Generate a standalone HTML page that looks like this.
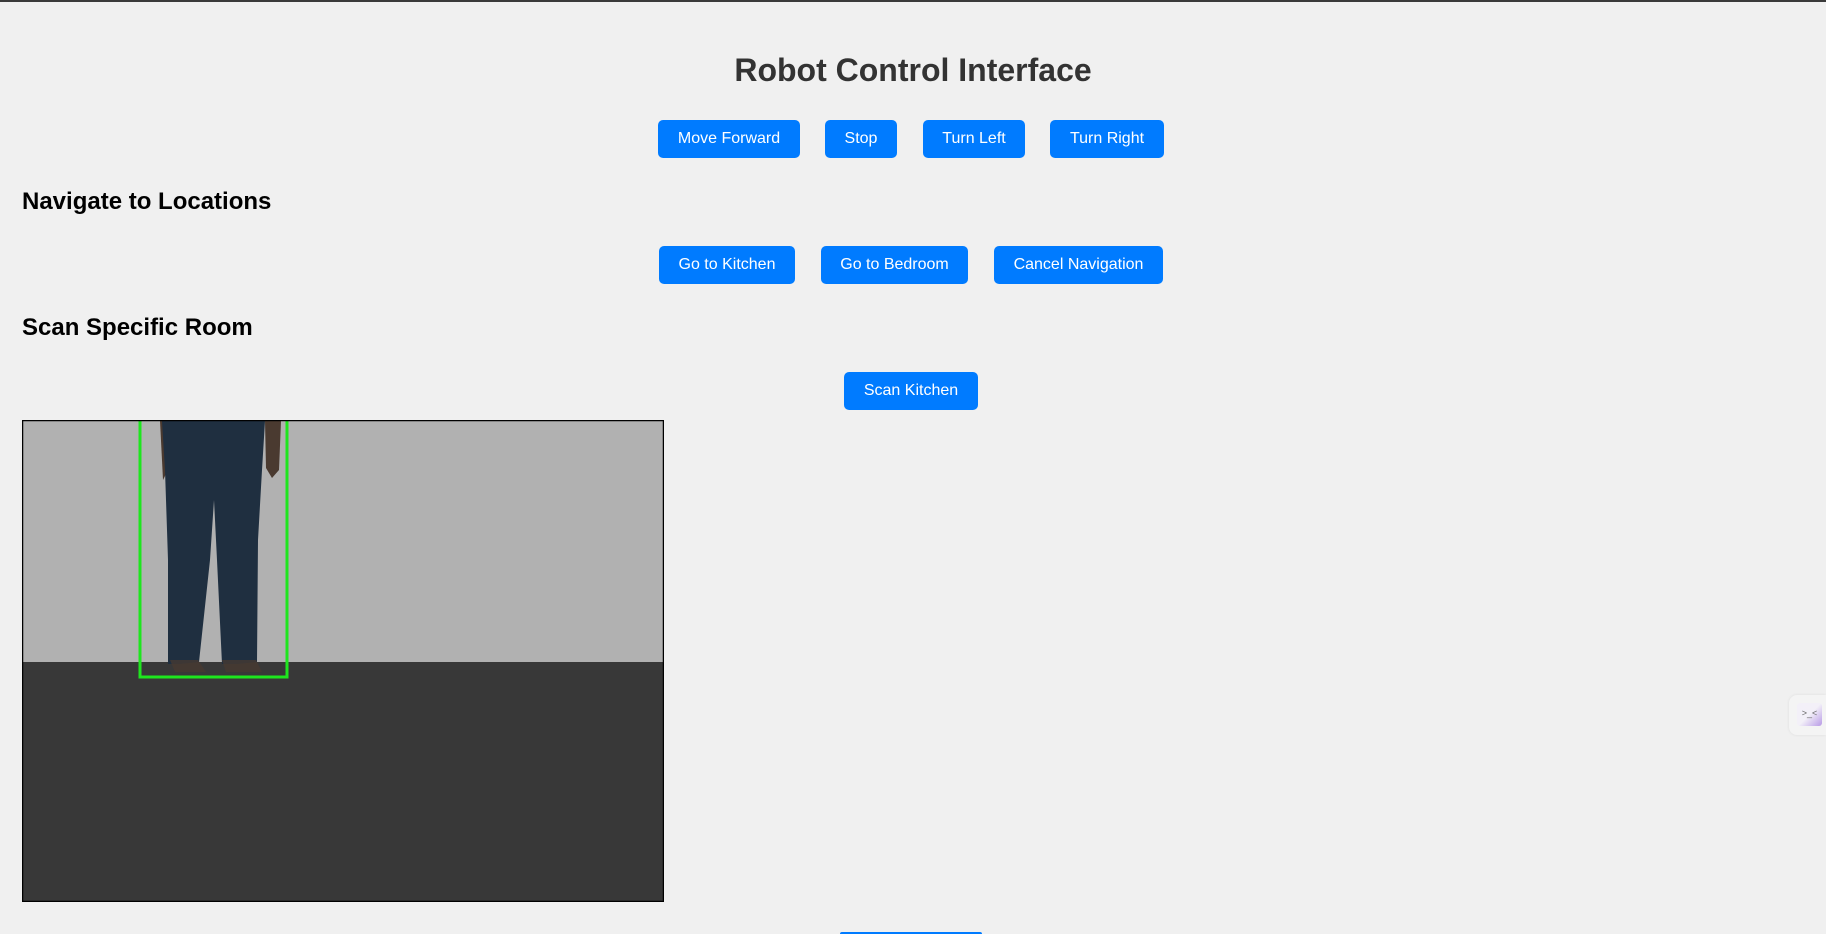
<!DOCTYPE html>
<html style="overflow:hidden;height:934px"><head><meta charset="utf-8"><style>
body{margin:0;width:1826px;height:934px;overflow:hidden;background:#f0f0f0;font-family:"Liberation Sans",Arial,sans-serif;position:relative;border-top:2px solid #3a3a3a;box-sizing:border-box}
.b{position:absolute;background:#007bff;color:#fff;border-radius:5px;height:38px;line-height:38px;text-align:center;font-size:16px}
h1,h2{position:absolute;margin:0;font-weight:bold}
h1{font-size:32px;color:#333;left:0;width:1826px;text-align:center;top:50px}
h2{font-size:24px;color:#000;left:22px}
</style></head><body>
<h1>Robot Control Interface</h1>
<div class="b" style="left:658px;top:118px;width:142px">Move Forward</div>
<div class="b" style="left:825px;top:118px;width:72px">Stop</div>
<div class="b" style="left:923px;top:118px;width:102px">Turn Left</div>
<div class="b" style="left:1050px;top:118px;width:114px">Turn Right</div>
<h2 style="top:186px">Navigate to Locations</h2>
<div class="b" style="left:659px;top:244px;width:136px">Go to Kitchen</div>
<div class="b" style="left:821px;top:244px;width:147px">Go to Bedroom</div>
<div class="b" style="left:994px;top:244px;width:169px">Cancel Navigation</div>
<h2 style="top:312px">Scan Specific Room</h2>
<div class="b" style="left:844px;top:370px;width:134px">Scan Kitchen</div>
<svg style="position:absolute;left:22px;top:418px" width="642" height="482" viewBox="22 420 642 482">
<rect x="22" y="420" width="642" height="482" fill="#b1b1b1"/>
<rect x="22" y="662" width="642" height="240" fill="#383838"/>
<path d="M160 421 L166 421 L168 470 L163 480 Z" fill="#4a3a30"/>
<path d="M265 421 L281 421 L279 470 L272 478 L266 468 Z" fill="#4a3a30"/>
<path d="M162 421 L265 421 L262 470 L258 540 L257 662 L237 664 L222 664 L217 560 L214 500 L210 560 L199 662 L180 664 L168 664 L168 560 L165 470 Z" fill="#1f2f40"/>
<path d="M170 660 L198 660 L206 672 L175 672 Z M222 660 L256 660 L262 672 L226 672 Z" fill="#4a3a30" opacity=".7"/>
<rect x="140" y="418" width="147" height="259" fill="none" stroke="#1ee61e" stroke-width="3"/>
<rect x="22.5" y="420.5" width="641" height="481" fill="none" stroke="#000" stroke-width="1.5"/>
</svg>
<div style="position:absolute;left:840px;top:930px;width:142px;height:2px;background:#007bff;border-radius:3px 3px 0 0"></div>
<div style="position:absolute;left:1789px;top:693px;width:37px;height:40px;background:#f4f4f4;border-radius:8px 0 0 8px;box-shadow:0 0 3px rgba(0,0,0,.08)"></div>
<div style="position:absolute;left:1797px;top:701px;width:25px;height:23px;border-radius:3px;background:linear-gradient(135deg,#f3f0f8 50%,#b89ae6);font-size:9px;color:#666;text-align:center;line-height:20px">&gt;_&lt;</div>
</body></html>
